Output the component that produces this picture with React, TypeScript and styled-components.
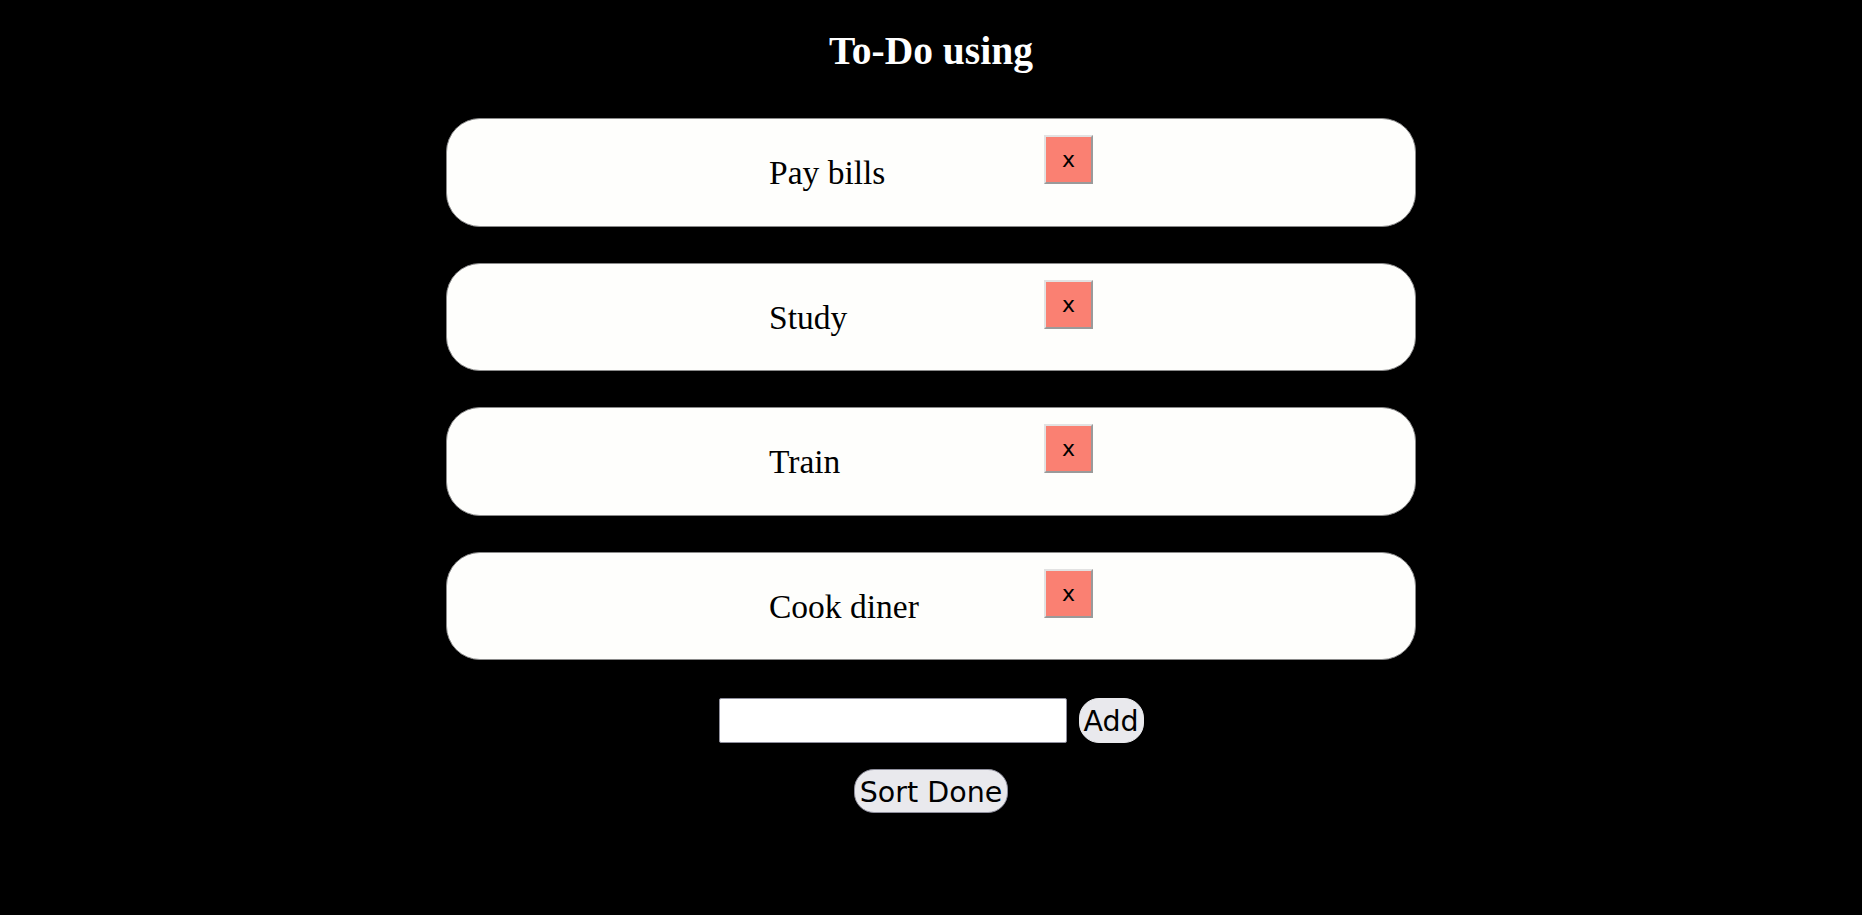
import React from "react";
import styled, { createGlobalStyle } from "styled-components";

const Global = createGlobalStyle`
  html, body { margin: 0; padding: 0; background: #000; }
  body { font-family: "Liberation Serif", "Times New Roman", serif; }
`;

const Page = styled.div`
  display: flex;
  flex-direction: column;
  align-items: center;
  min-height: 915px;
  background: #000;
`;

const Title = styled.h1`
  margin: 28px 0 44px;
  font-family: "Liberation Serif", serif;
  font-weight: bold;
  font-size: 39.5px;
  line-height: 46px;
  color: #fff;
`;

const List = styled.ul`
  list-style: none;
  margin: 0;
  padding: 0;
  display: flex;
  flex-direction: column;
  gap: 36px;
`;

const Card = styled.li`
  box-sizing: border-box;
  width: 970px;
  height: 108.5px;
  background: #fefefc;
  border: 1px solid #8a8a8a;
  border-radius: 34px;
  display: flex;
  justify-content: center;
  align-items: flex-start;
`;

const ItemText = styled.span`
  width: 275px;
  margin-top: 35px;
  font-family: "Liberation Serif", serif;
  font-size: 33.5px;
  line-height: 37px;
  color: #000;
`;

const DeleteButton = styled.button`
  box-sizing: border-box;
  width: 49px;
  height: 49px;
  margin-top: 16px;
  padding: 0;
  background: #fa8072;
  border-width: 2px;
  border-style: solid;
  border-color: #e2e2e2 #9a9a9a #9a9a9a #e2e2e2;
  font-family: "DejaVu Sans", sans-serif;
  font-size: 22px;
  color: #000;
  display: flex;
  align-items: center;
  justify-content: center;
`;

const AddRow = styled.div`
  display: flex;
  gap: 12px;
  margin-top: 37.5px;
`;

const TextInput = styled.input`
  box-sizing: border-box;
  width: 348px;
  height: 45px;
  border: 1px solid #8f8f9d;
  border-radius: 2px;
  background: #fff;
`;

const PillButton = styled.button<{ $w: number; $h: number; $bordered?: boolean }>`
  box-sizing: border-box;
  width: ${(p) => p.$w}px;
  height: ${(p) => p.$h}px;
  padding: 3px 0 0;
  background: #e9e9ed;
  border: 1px solid ${(p) => (p.$bordered ? "#8f8f9d" : "#e9e9ed")};
  border-radius: 20px;
  font-family: "DejaVu Sans", sans-serif;
  font-size: 28.5px;
  color: #000;
  display: flex;
  align-items: center;
  justify-content: center;
`;

const SortWrap = styled.div`
  margin-top: 26px;
`;

const items = ["Pay bills", "Study", "Train", "Cook diner"];

export default function App() {
  return (
    <Page>
      <Global />
      <Title>To-Do using</Title>
      <List>
        {items.map((t) => (
          <Card key={t}>
            <ItemText>{t}</ItemText>
            <DeleteButton>x</DeleteButton>
          </Card>
        ))}
      </List>
      <AddRow>
        <TextInput type="text" />
        <PillButton $w={65} $h={45}>Add</PillButton>
      </AddRow>
      <SortWrap>
        <PillButton $w={154} $h={44} $bordered>Sort Done</PillButton>
      </SortWrap>
    </Page>
  );
}
